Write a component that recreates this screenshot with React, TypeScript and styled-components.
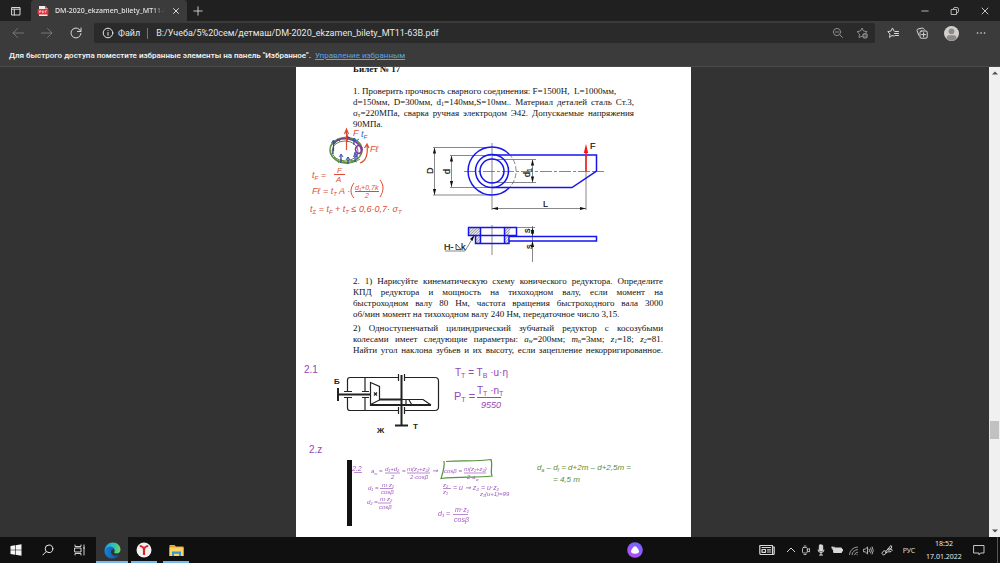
import React from "react";
import styled, { createGlobalStyle } from "styled-components";

const ui = `Roboto, "Noto Sans", sans-serif`;
const compactUi = `"Noto Sans", "Open Sans", sans-serif`;
const serif = `"Liberation Serif", "Times New Roman", serif`;

const GlobalStyle = createGlobalStyle`
  * { box-sizing: border-box; }
  body { margin: 0; background: #333; font-family: ${ui}; }
  button, input { font: inherit; color: inherit; background: none; border: 0; padding: 0; margin: 0; }
  p, h1 { margin: 0; }
`;

const Window = styled.div`
  display: flex;
  flex-direction: column;
  height: 100vh;
  overflow: hidden;
`;

const TabStrip = styled.header`
  display: flex;
  flex: none;
  height: 21px;
  background: #202020;
  color: #e6e6e6;
`;

const Tab = styled.div`
  display: flex;
  align-items: center;
  width: 156px;
  padding-left: 6px;
  background: #3b3b3b;
  border-radius: 3px 3px 0 0;
`;

const TabTitle = styled.span`
  flex: 1;
  min-width: 0;
  margin-left: 6px;
  overflow: hidden;
  white-space: nowrap;
  font-family: ${compactUi};
  font-size: 7px;
  font-weight: 500;
  line-height: 20px;
  mask-image: linear-gradient(90deg, #000 88%, transparent);
`;

const IconButton = styled.button<{ $w?: number; $tone?: string }>`
  display: flex;
  flex: none;
  align-items: center;
  justify-content: center;
  width: ${(p) => p.$w ?? 30}px;
  height: 100%;
  color: ${(p) => p.$tone ?? "#d8d8d8"};
`;

const Spacer = styled.div`
  flex: 1;
`;

const Toolbar = styled.nav`
  display: flex;
  flex: none;
  align-items: center;
  height: 24px;
  padding: 2px 5px 2px 3px;
  background: #3b3b3b;
`;

const AddressBar = styled.div`
  display: flex;
  flex: 1;
  align-items: center;
  height: 20px;
  padding-left: 8px;
  margin: 0 3px;
  background: #2a2a2a;
  border-radius: 2px;
  color: #e8e8e8;
  font-size: 9px;
`;

const SchemeLabel = styled.label`
  margin-left: 4px;
  padding-right: 7px;
  border-right: 1px solid #777;
  line-height: 11px;
`;

const UrlInput = styled.input`
  && {
    flex: 1;
    min-width: 0;
    height: 20px;
    margin-left: 8px;
    outline: 0;
  }
`;

const FavouritesBar = styled.div`
  display: flex;
  flex: none;
  align-items: center;
  height: 22px;
  padding: 0 9px;
  gap: 4px;
  background: #3b3b3b;
  border-bottom: 1px solid #4a4a4a;
  color: #f0f0f0;
  font-size: 8px;
  font-weight: 600;
`;

const ManageLink = styled.a`
  color: #5aa5e6;
  font-weight: 400;
`;

const Viewer = styled.main`
  display: flex;
  flex: 1;
  min-height: 0;
  background: #333;
`;

const Canvas = styled.div`
  display: flex;
  flex: 1;
  justify-content: center;
  padding-right: 2px;
  overflow: hidden;
`;

const Sheet = styled.article`
  flex: none;
  width: 395px;
  min-height: 100%;
  background: #fff;
  color: #111;
  font-family: ${serif};
  font-size: 9px;
  line-height: 11px;
`;

const Heading = styled.h1`
  margin-top: -3px;
  padding-left: 57px;
  font-size: 9px;
  line-height: 11px;
`;

const Paragraph = styled.p<{ $gap: number; $end: number }>`
  margin: ${(p) => p.$gap}px ${(p) => p.$end}px 0 57px;
`;

const Line = styled.span<{ $full?: boolean }>`
  display: block;
  text-align-last: ${(p) => (p.$full ? "justify" : "left")};
`;

const Small = styled.sub`
  font-size: 6px;
  line-height: 0;
  vertical-align: -1px;
`;

const Figure = styled.svg`
  display: block;
  width: 100%;
`;

const Scrollbar = styled.div`
  display: flex;
  flex: none;
  flex-direction: column;
  align-items: center;
  width: 11px;
  background: #f0f0f0;
`;

const ScrollArrow = styled.button`
  display: flex;
  align-items: center;
  justify-content: center;
  height: 12px;
  width: 11px;
`;

const ScrollTrack = styled.div`
  display: flex;
  flex: 1;
  flex-direction: column;
`;

const ScrollThumb = styled.div`
  flex: none;
  width: 9px;
  height: 18px;
  background: #c1c1c1;
`;

const TrackPart = styled.div<{ $share: number }>`
  flex: ${(p) => p.$share};
`;

const Taskbar = styled.footer`
  display: flex;
  flex: none;
  height: 26px;
  background: #101010;
  color: #e8e8e8;
  font-family: ${compactUi};
  font-size: 7px;
`;

const TaskButton = styled.button<{ $active?: boolean; $open?: boolean }>`
  display: flex;
  align-items: center;
  justify-content: center;
  width: 32px;
  height: 26px;
  background-color: ${(p) => (p.$active ? "#333" : "transparent")};
  background-image: ${(p) => (p.$open ? "linear-gradient(#76b9ed, #76b9ed)" : "none")};
  background-size: ${(p) => (p.$active ? "32px" : "26px")} 2px;
  background-position: center bottom;
  background-repeat: no-repeat;
`;

const AliceSlot = styled.div`
  width: 132px;
`;

const Clock = styled.time`
  width: 48px;
  text-align: center;
  line-height: 13px;
  white-space: nowrap;
`;

const ShowDesktop = styled.button`
  && {
    width: 3px;
    margin-left: 7px;
    border-left: 1px solid #555;
  }
`;

type IconProps = { size?: number; w?: number; h?: number; children: React.ReactNode; sw?: number };
const Icon = ({ size = 12, w, h, sw = 1, children }: IconProps) => (
  <svg width={w ?? size} height={h ?? size} viewBox={`0 0 ${w ?? size} ${h ?? size}`} fill="none" stroke="currentColor" strokeWidth={sw} strokeLinecap="round" strokeLinejoin="round" aria-hidden="true">
    {children}
  </svg>
);

/* Handwritten notes: x, baseline, text, size; "_" starts a subscript letter. */
type Note = [number, number, string, number];

const NoteText = ({ note, color }: { note: Note; color: string }) => {
  const [x, y, text, size] = note;
  const parts = text.split(/(_.)/).filter(Boolean);
  let dropped = false;
  return (
    <text x={x} y={y} fontSize={size} fill={color} fontStyle={size > 9 ? "normal" : "italic"} fontFamily='"Liberation Sans", sans-serif'>
      {parts.map((part, i) => {
        const sub = part.startsWith("_");
        const dy = sub && !dropped ? 2 : !sub && dropped ? -2 : 0;
        dropped = sub;
        return (
          <tspan key={i} dy={dy} fontSize={sub ? Math.round(size * 0.65) : size}>
            {sub ? part.slice(1) : part}
          </tspan>
        );
      })}
    </text>
  );
};

const Notes = ({ items, color }: { items: Note[]; color: string }) => (
  <>
    {items.map((n, i) => (
      <NoteText key={i} note={n} color={color} />
    ))}
  </>
);

const redNotes: Note[] = [
  [353, 136, "F", 9],
  [370, 152, "Fℓ", 9],
  [312, 178, "t_F  =", 9],
  [337, 173, "F", 8],
  [336, 182, "A", 8],
  [312, 194, "Fℓ = t_T  A ·", 9],
  [355, 190, "d₁+0,7k", 7],
  [365, 198, "2", 7],
  [310, 212, "t_Σ = t_F + t_T  ≤ 0,6·0,7· σ_T", 9],
];

const purpleBig: Note[] = [
  [304, 373, "2.1", 10],
  [309, 453, "2.z", 10],
  [455, 376, "T_T = T_B ·u·η", 10],
  [454, 400, "P_T =", 11],
  [477, 394, "T_T ·n_T", 10],
  [481, 408, "9550", 9],
];

const purpleSmall: Note[] = [
  [352, 471, "2.2", 7],
  [371, 473, "a_w  =", 6],
  [385, 471, "d₁+d₂", 6],
  [391, 479, "2", 6],
  [402, 473, "=", 6],
  [407, 471, "m(z₁+z₂)", 6],
  [410, 479, "2·cosβ", 6],
  [432, 473, "⇒", 7],
  [444, 473, "cosβ =", 6],
  [464, 471, "m(z₁+z₂)", 6],
  [467, 479, "2·a_w", 6],
  [368, 490, "d₁ =", 6],
  [382, 487, "m·z₁", 6],
  [381, 494, "cosβ", 6],
  [367, 504, "d₂ =", 6],
  [380, 501, "m·z₂", 6],
  [379, 509, "cosβ", 6],
  [443, 487, "z₂", 6],
  [443, 494, "z₁", 6],
  [453, 490, "= u ⇒ z₂ = u·z₁", 7],
  [480, 496, "z₁(u+1)=99", 6],
  [438, 516, "d₁ =", 7],
  [455, 512, "m·z₁", 7],
  [454, 522, "cosβ", 7],
];

const greenNotes: Note[] = [
  [537, 470, "d_a – d_f  =  d+2m – d+2,5m =", 8],
  [553, 482, "= 4,5 m", 8],
];

const Arrow = ({ x, y, dir }: { x: number; y: number; dir: "up" | "down" | "left" | "right" }) => {
  const angle = { up: 0, right: 90, down: 180, left: 270 }[dir];
  return <path d="M0 0L-1.6 6L1.6 6Z" transform={`translate(${x} ${y}) rotate(${angle})`} fill="#111" />;
};

const WeldFigure = () => (
  <Figure viewBox="296 130 395 146" height={146} overflow="visible" role="img" aria-label="Чертёж сварного соединения">
    <defs>
      <pattern id="hatch" width="2" height="2" patternUnits="userSpaceOnUse" patternTransform="rotate(-45)">
        <path d="M0 0H2" stroke="#333" strokeWidth="1" />
      </pattern>
    </defs>
    <g fill="none" strokeWidth="1">
      <ellipse cx="346" cy="150" rx="16" ry="12.5" stroke="#5f8f45" strokeWidth="1.5" />
      <ellipse cx="345" cy="151" rx="13" ry="10" stroke="#638f4a" />
      <path d="M331 153C333 163 348 167 360 159M331 146C338 134 357 136 361 148M334 157L339 163M340 159L348 164M350 160L357 162" stroke="#5f8f45" />
      <path d="M334 144C338 137 351 137 358 144C363 149 362 155 357 153C353 148 359 142 362 148C362 153 359 155 356 152" stroke="#8236a2" strokeWidth="1.6" />
      <path d="M333.500 151V141M341 163V155M348 164V157M355 162V152M357 159V154M333 154V149M347 142V134M354 145V138M340 141L337 139M350 138L346 136" stroke="#3f3fb0" strokeWidth="1.2" />
      <path d="M331.500 143L333.500 140L335.500 143M339.500 157L341 154L343 157M346 160L348 157L350 160M353.500 157L355 153L357 157M352 141L354.500 138L356 141" stroke="#2c58b4" />
      <path d="M346.500 150V130M344.500 134L346.500 129L348.500 134M360 163C366 161 368 154 367 145M364.500 148L367 144L369 148" stroke="#e0492d" strokeWidth="1.2" />
      <path d="M359 139L356 141" stroke="#3767b8" />
      <path d="M334 174.500H345M355 191.500H379M354 183C350 188 350 194 354 198M380 180C384 185 384 191 380 197" stroke="#e0492d" />
    </g>
    <Notes items={redNotes} color="#dd5036" />
    <Notes items={[[361, 137, "t_F", 9]]} color="#3767b8" />

    <g stroke="#555" strokeWidth="0.7" fill="none">
      <path d="M433 147.500H491M433 195H491M450 155.500H491M450 187.500H491M492 159.500H536M492 182.500H536" />
      <path d="M434.500 148V195M451.500 156V187M532.500 160V182M492 208.500H586M492 143V210M586 155V210" />
      <path d="M464 171.500H604" strokeDasharray="12 2 3 2" />
      <path d="M509 154A24 24 0 0 1 509 188" strokeDasharray="5 2" />
      <path d="M492 225V255M532.500 226V262M516 227.500H535M445 251H465L474 236" />
    </g>
    <g fill="none" stroke="#1414ee" strokeWidth="1.5">
      <path d="M509 154A24 24 0 1 0 509 188" />
      <circle cx="492" cy="171" r="16.500" />
      <circle cx="492" cy="171" r="12" />
      <path d="M492 155H596.500V171L572 187.500H492" />
    </g>
    <path d="M468 227H480V235H468ZM475 235H480V243H475ZM505 227H511L509 235V243H505Z" fill="url(#hatch)" />
    <g fill="none" stroke="#1414ee" strokeWidth="1.500">
      <path d="M468.500 227.500H516.500V235.500H468.500ZM475.500 235.500H509V243.500H475.500ZM480.500 227V243M504.500 227V243M509 236.500H596.500V241H509" />
    </g>
    <Arrow x={434.5} y={147.500} dir="up" />
    <Arrow x={434.5} y={195} dir="down" />
    <Arrow x={451.5} y={155.500} dir="up" />
    <Arrow x={451.5} y={187} dir="down" />
    <Arrow x={532.5} y={159.500} dir="up" />
    <Arrow x={532.5} y={182.500} dir="down" />
    <Arrow x={492} y={208.500} dir="left" />
    <Arrow x={586} y={208.500} dir="right" />
    <Arrow x={532.5} y={227.500} dir="up" />
    <Arrow x={532.5} y={236} dir="down" />
    <Arrow x={532.5} y={241} dir="up" />
    <path d="M474.500 235L470 239L472.500 241Z" fill="#111" />
    <path d="M586 171V150" stroke="#f01818" strokeWidth="1.500" />
    <path d="M586 144L583.800 153H588.200Z" fill="#f01818" />
    <g fontFamily='"Liberation Sans", sans-serif' fontSize="9" fill="#111" stroke="#111" strokeWidth="0.200">
      <text x="590" y="149">F</text>
      <text x="543" y="207">L</text>
      <text transform="translate(433 174) rotate(-90)">D</text>
      <text transform="translate(450 174) rotate(-90)">d</text>
      <text transform="translate(530 177) rotate(-90)">d<tspan fontSize="7" dy="2">1</tspan></text>
      <text transform="translate(530 233) rotate(-90)">s</text>
      <text transform="translate(532 249) rotate(-90)">s</text>
      <text x="444" y="250">H-</text>
      <text x="461" y="250">k</text>
    </g>
    <path d="M456 244L461 249.500H456Z" fill="none" stroke="#222" strokeWidth="0.800" />
  </Figure>
);

const GearFigure = () => (
  <Figure viewBox="296 356 395 181" height={181} role="img" aria-label="Кинематическая схема редуктора">
    <g fill="none" stroke="#222" strokeWidth="1.200">
      <path d="M347.500 391V380Q347.500 377.500 350 377.500H398M405 377.500H435Q438.500 377.500 438.500 381V407Q438.500 410.500 435 410.500H405M398 410.500H350Q347.500 410.500 347.500 408V398" />
      <path d="M365 378V391M365 398V410M344 391.500H352M344 397.500H352M362 391.500H369M362 397.500H369M398.500 374V381M404.500 374V381M398.500 407V414M404.500 407V414" />
      <path d="M370.500 382.500L379.500 386.500V400L370.500 404.500ZM379 399.500H423L431 405M406 400V405M409 400L412 405M374 392.500L377 395.500M377 392.500L374 395.500" />
      <path d="M338 394.500H370M338 388V401M370 405H431M379 399.500H402M401.500 375V425M395 425.500H408" strokeWidth="2" />
    </g>
    <g fontFamily='"Liberation Sans", sans-serif' fontWeight="700" fontSize="8" fill="#222">
      <text x="334" y="384">Б</text>
      <text x="413" y="429">Т</text>
      <text x="377" y="433">Ж</text>
    </g>
    <Notes items={purpleBig} color="#9447b8" />
    <path d="M477 397.500H501" stroke="#9447b8" />
    <path d="M347 460H352V526H347Z" fill="#111" />
    <g opacity="0.900">
      <Notes items={purpleSmall} color="#9447b8" />
      <path d="M354 472.500H362M385 473H400M407 473H430M464 473H486M380 488.500H393M378 503H391M443 488.500H451M453 514.500H468" stroke="#9447b8" strokeWidth="0.700" />
    </g>
    <path d="M446 461.500C460 460 476 462 491 459.500C493 465 490 471 492 476C474 478 460 476 441 478.500C443 472 445 467 444 461" fill="none" stroke="#55933c" strokeWidth="1.200" />
    <Notes items={greenNotes} color="#558c3c" />
  </Figure>
);

export default function App() {
  return (
    <Window>
      <GlobalStyle />
      <TabStrip>
        <IconButton $w={31} aria-label="Меню вкладок">
          <Icon><path d="M2 2.500H10V10H2ZM2 4.200H10M4.300 4.200V10" /></Icon>
        </IconButton>
        <Tab>
          <svg width="12" height="12" viewBox="0 0 12 12" aria-hidden="true">
            <path d="M2 1H8L10.500 3.500V11H2Z" fill="#f3eeee" />
            <path d="M8 1V3.500H10.500Z" fill="#e33" />
            <rect x="0.500" y="4" width="11" height="5.500" rx="1" fill="#e2323a" />
            <path d="M2.500 7.800V5.800H4V6.800H2.700M5.500 5.800V7.800Q7 7.500 6.800 6.500Q6.500 5.800 5.500 5.800M8.500 7.800V5.800H10" fill="none" stroke="#fff" strokeWidth="0.600" />
          </svg>
          <TabTitle>DM-2020_ekzamen_bilety_MT11-63B.pdf</TabTitle>
          <IconButton $w={22} aria-label="Закрыть вкладку"><Icon size={8}><path d="M1.500 1.500L6.500 6.500M6.500 1.500L1.500 6.500" /></Icon></IconButton>
        </Tab>
        <IconButton $w={22} aria-label="Новая вкладка"><Icon size={10} sw={0.9}><path d="M5 .8V9.200M.8 5H9.200" /></Icon></IconButton>
        <Spacer />
        <IconButton aria-label="Свернуть"><Icon size={8} sw={0.8}><path d="M.8 4H7.200" /></Icon></IconButton>
        <IconButton aria-label="Восстановить"><Icon size={10} sw={0.8}><path d="M1.500 3.500H6.500V8.500H1.500ZM3.300 2.900Q3.300 1.500 5 1.500H6.800Q8.500 1.500 8.500 3.200V5.200Q8.500 6.700 7.100 6.900" /></Icon></IconButton>
        <IconButton aria-label="Закрыть"><Icon size={8} sw={0.9}><path d="M1 1L7 7M7 1L1 7" /></Icon></IconButton>
      </TabStrip>

      <Toolbar>
        <IconButton $tone="#757575" aria-label="Назад"><Icon><path d="M11.500 6H1M5.500 1.500L1 6L5.500 10.500" /></Icon></IconButton>
        <IconButton $w={28} $tone="#757575" aria-label="Вперёд"><Icon><path d="M.5 6H11M6.500 1.500L11 6L6.500 10.500" /></Icon></IconButton>
        <IconButton aria-label="Обновить"><Icon><path d="M10.800 4.500A5 5 0 1 0 11 6.500M11 1V4.500H7.500" /></Icon></IconButton>
        <AddressBar>
          <Icon><circle cx="6" cy="6" r="4.800" /><path d="M6 5.500V8.300M6 3.500V3.600" /></Icon>
          <SchemeLabel htmlFor="url">Файл</SchemeLabel>
          <UrlInput id="url" defaultValue="B:/Учеба/5%20сем/детмаш/DM-2020_ekzamen_bilety_MT11-63B.pdf" />
          <IconButton $w={22} $tone="#8c8c8c" aria-label="Масштаб"><Icon><circle cx="5" cy="5" r="3.600" /><path d="M3.500 5H6.500M7.800 7.800L10.500 10.500" /></Icon></IconButton>
          <IconButton $w={26} $tone="#8c8c8c" aria-label="Добавить в избранное"><Icon><path d="M6.500 9L3 10.500L3.500 7L1 4.600L4.500 4L6 1L7.500 4L11 4.600L10 5.800" /><circle cx="9" cy="8.800" r="2.800" fill="currentColor" stroke="none" /><path d="M9 7.400V10.200M7.600 8.800H10.400" stroke="#2a2a2a" strokeWidth="0.700" /></Icon></IconButton>
        </AddressBar>
        <IconButton aria-label="Избранное"><Icon><path d="M7 9L5 8.500L2.500 10.500L3 7L.8 4.600L4 4L5.500 1L7 4M8 4.500H11.500M7.500 6.500H11.500M8 8.500H11.500" /></Icon></IconButton>
        <IconButton $w={28} aria-label="Коллекции"><Icon><rect x="4" y="4" width="7.200" height="7.200" rx="1.200" /><path d="M7.600 5.700V9.500M5.700 7.600H9.500M2.800 8.300L1 3.500Q.8 2.500 1.800 2.100L6.200 1Q7.500 .8 8.300 2.500" /></Icon></IconButton>
        <IconButton $w={31} aria-label="Профиль">
          <svg width="15" height="15" viewBox="0 0 15 15" aria-hidden="true"><circle cx="7.500" cy="7.500" r="7.500" fill="#d2d0ce" /><circle cx="7.500" cy="5.300" r="2.900" fill="#8d8986" /><path d="M2.500 12.800Q2.500 9.200 5 9.200H10Q12.500 9.200 12.500 12.800Q7.500 16.500 2.500 12.800Z" fill="#8d8986" /></svg>
        </IconButton>
        <IconButton $w={28} aria-label="Ещё"><Icon sw={1.6}><path d="M2.500 6H2.600M6 6H6.100M9.500 6H9.600" /></Icon></IconButton>
      </Toolbar>

      <FavouritesBar>
        <span>Для быстрого доступа поместите избранные элементы на панель "Избранное".</span>
        <ManageLink href="#favourites">Управление избранным</ManageLink>
      </FavouritesBar>

      <Viewer>
        <Canvas>
          <Sheet>
            <Heading>Билет № 17</Heading>
            <Paragraph $gap={11} $end={57}>
              <Line>1. Проверить прочность сварного соединения: F=1500Н,&nbsp; L=1000мм,</Line>
              <Line $full>d=150мм, D=300мм, d<Small>1</Small>=140мм,S=10мм.. Материал деталей сталь Ст.3,</Line>
              <Line $full>σ<Small>т</Small>=220МПа, сварка ручная электродом Э42. Допускаемые напряжения</Line>
              <Line>90МПа.</Line>
            </Paragraph>
            <WeldFigure />
            <Paragraph $gap={0} $end={28}>
              <Line $full>2. 1) Нарисуйте кинематическую схему конического редуктора. Определите</Line>
              <Line $full>КПД редуктора и мощность на тихоходном валу, если момент на</Line>
              <Line $full>быстроходном валу 80 Нм, частота вращения быстроходного вала 3000</Line>
              <Line>об/мин момент на тихоходном валу 240 Нм, передаточное число 3,15.</Line>
            </Paragraph>
            <Paragraph $gap={3} $end={28}>
              <Line $full>2) Одноступенчатый цилиндрический зубчатый редуктор с косозубыми</Line>
              <Line $full>колесами имеет следующие параметры: <i>a<Small>w</Small></i>=200мм; <i>m<Small>n</Small></i>=3мм; <i>z<Small>1</Small></i>=18; <i>z<Small>2</Small></i>=81.</Line>
              <Line $full>Найти угол наклона зубьев и их высоту, если зацепление некорригированное.</Line>
            </Paragraph>
            <GearFigure />
          </Sheet>
        </Canvas>
        <Scrollbar>
          <ScrollArrow aria-label="Вверх"><svg width="6" height="4" aria-hidden="true"><path d="M0 3.500L3 .5L6 3.500Z" fill="#505050" /></svg></ScrollArrow>
          <ScrollTrack>
            <TrackPart $share={80} />
            <ScrollThumb />
            <TrackPart $share={20} />
          </ScrollTrack>
          <ScrollArrow aria-label="Вниз"><svg width="6" height="4" aria-hidden="true"><path d="M0 .5L3 3.500L6 .5Z" fill="#505050" /></svg></ScrollArrow>
        </Scrollbar>
      </Viewer>

      <Taskbar>
        <TaskButton aria-label="Пуск"><svg width="12" height="12" viewBox="0 0 12 12" fill="#f4f4f4" aria-hidden="true"><path d="M0.500 2L5 1.300V5.700H0.500ZM5.600 1.200L11.500 .3V5.700H5.600ZM0.500 6.300H5V10.700L.5 10ZM5.600 6.300H11.500V11.700L5.600 10.800Z" /></svg></TaskButton>
        <TaskButton aria-label="Поиск"><Icon><circle cx="7" cy="4.800" r="3.800" /><path d="M4.200 7.600L.8 11" /></Icon></TaskButton>
        <TaskButton aria-label="Представление задач"><Icon sw={0.9}><path d="M1 1V2.500H7V1M1 11V9.500H7V11M1 4H7V8H1ZM10 1V11M9.500 4H10.500" /></Icon></TaskButton>
        <TaskButton $active $open aria-label="Microsoft Edge">
          <svg width="17" height="17" viewBox="0 0 17 17" aria-hidden="true">
            <defs>
              <linearGradient id="edgeTop" x1="0" x2="1" y1=".3" y2=".4"><stop offset="0" stopColor="#1b9de2" /><stop offset=".6" stopColor="#35c1b5" /><stop offset="1" stopColor="#6bd757" /></linearGradient>
              <linearGradient id="edgeLow" x1="0" x2="1"><stop offset="0" stopColor="#1683d8" /><stop offset="1" stopColor="#0c4f9e" /></linearGradient>
            </defs>
            <path d="M.6 8.500C1 3.500 4.500 .5 8.700 .5C13.500 .5 16.500 4 16.500 7.500C16.500 10 14.800 11.500 12.500 11.500C10.500 11.500 9.800 10.700 10.300 10C11.500 8.200 10 6 7.500 6C4 6 1 8 .6 8.500Z" fill="url(#edgeTop)" />
            <path d="M.5 8.500C1.500 5.800 4 4.500 6.800 4.800C9 5 10.500 6.500 10.600 8C9.500 7 7.500 7.500 7 9.500C6.600 12 9 14 12 13.700C13.500 13.500 14.500 13 15.200 12.700C13.500 15.300 11.300 16.500 8.500 16.500C4 16.500 .3 13 .5 8.500Z" fill="url(#edgeLow)" />
          </svg>
        </TaskButton>
        <TaskButton $open aria-label="Яндекс Браузер">
          <svg width="16" height="16" viewBox="0 0 16 16" aria-hidden="true"><circle cx="8" cy="8" r="7.500" fill="#f1f1f1" /><path d="M3.800 4C6 4 8 6 8 8.300V13M12.200 4C10 4 8 6 8 8.300" fill="none" stroke="#e21f26" strokeWidth="2.100" /></svg>
        </TaskButton>
        <TaskButton $open aria-label="Проводник">
          <svg width="15" height="13" viewBox="0 0 15 13" aria-hidden="true"><path d="M.5 1H5.500L7 2.500H14.500V12H.5Z" fill="#e5a82e" /><path d="M.5 3.500H14.500V12H.5Z" fill="#ffd561" /><path d="M3 12V7.500H12V12H10V9.800H5V12Z" fill="#3b93d8" /></svg>
        </TaskButton>
        <Spacer />
        <AliceSlot>
          <TaskButton aria-label="Алиса">
            <svg width="16" height="16" viewBox="0 0 16 16" aria-hidden="true"><defs><linearGradient id="alice" x1="0" x2=".6" y1="1" y2="0"><stop offset="0" stopColor="#c14bf0" /><stop offset="1" stopColor="#7265ff" /></linearGradient></defs><circle cx="8" cy="8" r="7.800" fill="url(#alice)" /><path d="M8 4.300C9.500 4.300 12 8 12 9.600C12 11.200 10 11.700 8 11.700S4 11.200 4 9.600C4 8 6.500 4.300 8 4.300Z" fill="#fff" /></svg>
          </TaskButton>
        </AliceSlot>
        <IconButton $w={32} aria-label="Новости"><Icon w={16} h={12} sw={1.2}><path d="M.8 1.500H13.500V10.500H2Q.8 10.500 .8 9.200ZM13.500 3H15.200V9.500Q15.200 10.500 14.300 10.500H13M3 3.500H11.500M8.500 5.800H11.500M8.500 8H11.500" /><rect x="3" y="5.500" width="3.500" height="2.800" /></Icon></IconButton>
        <IconButton $w={15} aria-label="Скрытые значки"><Icon size={10}><path d="M1.200 6.800L5 3L8.800 6.800" /></Icon></IconButton>
        <IconButton $w={16} aria-label="Камера"><Icon size={10} sw={0.8}><rect x="1.500" y="2.500" width="4.800" height="5.500" rx="1" /><path d="M6.300 4.500L8.500 3.500V7L6.300 6M3 1H5M3 9.500H5" /></Icon></IconButton>
        <IconButton $w={14} aria-label="Микрофон"><Icon size={12}><rect x="4.300" y="1" width="3.400" height="6" rx=".8" fill="currentColor" /><path d="M3 6Q3 8.500 6 8.500T9 6M6 8.500V11M4.500 11H7.500" /></Icon></IconButton>
        <IconButton $w={18} aria-label="Батарея"><Icon size={12}><rect x="3" y="4" width="7.500" height="4.500" fill="currentColor" /><path d="M11.500 5.500V7M.8 3.300H3.500M1.300 3V5.200H3.200" /></Icon></IconButton>
        <IconButton $w={14} $tone="#a8a8a8" aria-label="Сеть"><Icon size={11} sw={0.9}><path d="M1.500 9.500A8 8 0 0 1 9.500 2M4 9.700A5.500 5.500 0 0 1 9.500 4.600M6.500 9.800A3.200 3.200 0 0 1 9.600 7.200M9 9.700H9.200" /></Icon></IconButton>
        <IconButton $w={16} aria-label="Громкость"><Icon size={11} sw={0.8}><path d="M.8 4.200H2.200L4.500 2V9L2.200 6.800H.8ZM6.200 4.200Q7.200 5.500 6.200 6.800M7.700 3Q9.300 5.500 7.700 8M9.200 1.900Q11.500 5.500 9.200 9.100" /></Icon></IconButton>
        <IconButton $w={22} aria-label="Windows Ink"><Icon size={12}><path d="M1 9.500C1 7 4 6 5 7.500S3.500 11.500 1.800 10.800M5 7.500L9.800 1.500L11 3L6.500 8.200L4.500 8.800M7 5H10.500Q12 6.500 10 7.500L8 8" /></Icon></IconButton>
        <IconButton $w={22} aria-label="Язык ввода">РУС</IconButton>
        <Clock>18:52<br />17.01.2022</Clock>
        <IconButton $w={22} aria-label="Уведомления"><Icon size={12} sw={0.9}><path d="M1 1.500H11V9H7.500L6 10.800V9H1Z" /></Icon></IconButton>
        <ShowDesktop aria-label="Показать рабочий стол" />
      </Taskbar>
    </Window>
  );
}
